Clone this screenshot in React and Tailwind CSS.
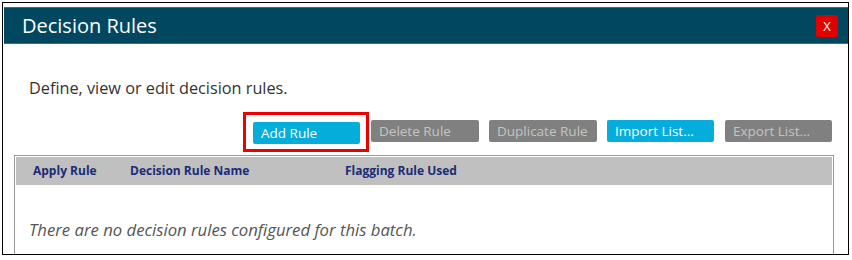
export default function App() {
  const font = { fontFamily: '"Open Sans", "Noto Sans", sans-serif' };
  const btnBase =
    "h-[22px] rounded-[2px] pl-[8px] text-left text-[13.5px] leading-[22px] whitespace-nowrap";
  return (
    <div className="w-[852px] h-[260px] bg-white pt-[2px] pl-[2px] pr-[3px]" style={font}>
      <div className="h-[253px] border border-black flex flex-col overflow-hidden">
        <div className="mt-[4px] ml-[1px] h-[37px] shrink-0 bg-[#00475f] border-t border-b border-[#336f85] flex items-center justify-between pl-[18px] pr-[10px]">
          <span className="text-white text-[20px] leading-none">Decision Rules</span>
          <button className="w-[22px] h-[22px] rounded-[2px] bg-[#e10000] text-white text-[13px] leading-[22px] text-center">
            X
          </button>
        </div>
        <div className="flex flex-col pl-[11px] pr-[14px]">
          <p className="mt-[33px] pl-[15px] text-[16.25px] leading-[22px] text-[#333]">
            Define, view or edit decision rules.
          </p>
          <div className="mt-[21px] flex justify-end gap-[10px] pr-[2px]">
            <div className="relative">
              <button className={`${btnBase} w-[107px] bg-[#05addb] text-white`}>Add Rule</button>
              <div className="pointer-events-none absolute -left-[10px] -right-[9px] -top-[8px] -bottom-[8px] border-[3px] border-[#ee0000]" />
            </div>
            <button className={`${btnBase} w-[108px] ml-[1px] bg-[#808080] text-[#c4c4c4]`}>Delete Rule</button>
            <button className={`${btnBase} w-[108px] bg-[#808080] text-[#c4c4c4]`}>Duplicate Rule</button>
            <button className={`${btnBase} w-[107px] bg-[#05addb] text-white`}>Import List...</button>
            <button className={`${btnBase} w-[107px] ml-[1px] bg-[#808080] text-[#c4c4c4]`}>Export List...</button>
          </div>
          <div className="mt-[11px] h-[140px] border border-[#9a9a9a] p-[1px]">
            <div className="h-[28px] bg-[#c0c0c0] flex items-center text-[12px] font-bold text-[#1b2b78]">
              <span className="pl-[17px] w-[114px]">Apply Rule</span>
              <span className="w-[215px]">Decision Rule Name</span>
              <span>Flagging Rule Used</span>
            </div>
            <p className="mt-[34px] pl-[13px] text-[16.7px] leading-[22px] italic text-[#555]">
              There are no decision rules configured for this batch.
            </p>
          </div>
        </div>
      </div>
    </div>
  );
}
